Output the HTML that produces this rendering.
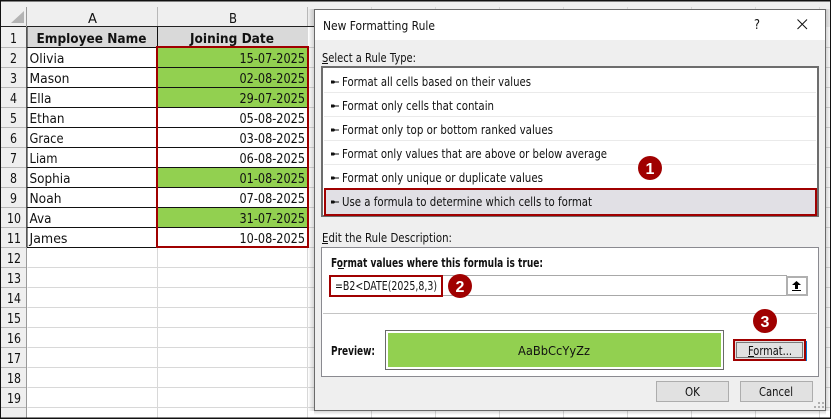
<!DOCTYPE html>
<html><head><meta charset="utf-8">
<style>
html,body{margin:0;padding:0;background:#fff;width:831px;height:419px;overflow:hidden}
svg{display:block}
text{font-family:"DejaVu Sans",sans-serif;font-size:12px;fill:#111}
.c{font-size:13.5px}
.b{font-weight:bold}
</style></head><body>
<svg width="831" height="419" viewBox="0 0 831 419" xmlns="http://www.w3.org/2000/svg">
<defs>
<linearGradient id="sl" x1="0" x2="1" y1="0" y2="0"><stop offset="0" stop-color="#000" stop-opacity="0"/><stop offset="1" stop-color="#000" stop-opacity=".16"/></linearGradient>
<linearGradient id="sr" x1="0" x2="1" y1="0" y2="0"><stop offset="0" stop-color="#000" stop-opacity=".16"/><stop offset="1" stop-color="#000" stop-opacity="0"/></linearGradient>
<linearGradient id="sb" x1="0" x2="0" y1="0" y2="1"><stop offset="0" stop-color="#000" stop-opacity=".16"/><stop offset="1" stop-color="#000" stop-opacity="0"/></linearGradient>
</defs>
<rect width="831" height="419" fill="#fff"/>
<!-- headers -->
<rect x="0" y="0" width="831" height="27" fill="#efefef"/>
<rect x="0" y="0" width="27" height="419" fill="#efefef"/>
<path d="M24 11V23H11Z" fill="#b4b4b4"/>
<!-- light grid -->
<path d="M27.5 247.5H831M27.5 267.5H831M27.500 287.500H831M27.500 307.500H831M27.500 327.500H831M27.500 347.500H831M27.500 367.500H831M27.500 387.500H831M27.500 407.500H831M308 47.500H831M308 67.500H831M308 87.500H831M308 107.500H831M308 127.500H831M308 147.500H831M308 167.500H831M308 187.500H831M308 207.500H831M308 227.500H831" stroke="#d8d8d8" stroke-width="1"/>
<path d="M157.500 247V419M307.500 247V419M371.500 7V419M435.500 7V419M499.500 7V419M563.500 7V419M627.500 7V419M691.500 7V419M755.500 7V419M819.500 7V419" stroke="#d8d8d8" stroke-width="1"/>
<!-- header separators -->
<path d="M0 47.500H27M0 67.500H27M0 87.500H27M0 107.500H27M0 127.500H27M0 147.500H27M0 167.500H27M0 187.500H27M0 207.500H27M0 227.500H27M0 247.500H27M0 267.500H27M0 287.500H27M0 307.500H27M0 327.500H27M0 347.500H27M0 367.500H27M0 387.500H27M0 407.500H27" stroke="#b8b8b8"/>
<path d="M157.500 7V26M307.500 7V26" stroke="#b8b8b8"/>
<path d="M0 26.500H320" stroke="#222"/>
<path d="M26.500 7V419" stroke="#999"/>
<!-- table -->
<rect x="27" y="27" width="281" height="20" fill="#d9d9d9"/>
<rect x="27" y="47" width="281" height="200" fill="#fff"/>
<rect x="158" y="47" width="150" height="60" fill="#92d050"/>
<rect x="158" y="167" width="150" height="20" fill="#92d050"/>
<rect x="158" y="207" width="150" height="20" fill="#92d050"/>
<path d="M27 47.500H308M27 67.500H308M27 87.500H308M27 107.500H308M27 127.500H308M27 147.500H308M27 167.500H308M27 187.500H308M27 207.500H308M27 227.500H308M27 247.500H158M27 27V247" stroke="#111" stroke-width="1"/>
<path d="M157.500 27V47" stroke="#111"/>
<rect x="157" y="47" width="151" height="200" fill="none" stroke="#a00000" stroke-width="2"/>
<!-- column headers -->
<text class="c" x="88" y="23" textLength="9" lengthAdjust="spacingAndGlyphs">A</text>
<text class="c" x="229" y="23" textLength="8" lengthAdjust="spacingAndGlyphs">B</text>
<text class="c b" x="36.500" y="43" textLength="110" lengthAdjust="spacingAndGlyphs">Employee Name</text>
<text class="c b" x="190" y="43" textLength="84" lengthAdjust="spacingAndGlyphs">Joining Date</text>
<!-- row numbers -->
<g>
<text class="c" x="10" y="43" textLength="7" lengthAdjust="spacingAndGlyphs">1</text>
<text class="c" x="10" y="63" textLength="7" lengthAdjust="spacingAndGlyphs">2</text>
<text class="c" x="10" y="83" textLength="7" lengthAdjust="spacingAndGlyphs">3</text>
<text class="c" x="10" y="103" textLength="7" lengthAdjust="spacingAndGlyphs">4</text>
<text class="c" x="10" y="123" textLength="7" lengthAdjust="spacingAndGlyphs">5</text>
<text class="c" x="10" y="143" textLength="7" lengthAdjust="spacingAndGlyphs">6</text>
<text class="c" x="10" y="163" textLength="7" lengthAdjust="spacingAndGlyphs">7</text>
<text class="c" x="10" y="183" textLength="7" lengthAdjust="spacingAndGlyphs">8</text>
<text class="c" x="10" y="203" textLength="7" lengthAdjust="spacingAndGlyphs">9</text>
<text class="c" x="7" y="223" textLength="14" lengthAdjust="spacingAndGlyphs">10</text>
<text class="c" x="7" y="243" textLength="14" lengthAdjust="spacingAndGlyphs">11</text>
<text class="c" x="7" y="263" textLength="14" lengthAdjust="spacingAndGlyphs">12</text>
<text class="c" x="7" y="283" textLength="14" lengthAdjust="spacingAndGlyphs">13</text>
<text class="c" x="7" y="303" textLength="14" lengthAdjust="spacingAndGlyphs">14</text>
<text class="c" x="7" y="323" textLength="14" lengthAdjust="spacingAndGlyphs">15</text>
<text class="c" x="7" y="343" textLength="14" lengthAdjust="spacingAndGlyphs">16</text>
<text class="c" x="7" y="363" textLength="14" lengthAdjust="spacingAndGlyphs">17</text>
<text class="c" x="7" y="383" textLength="14" lengthAdjust="spacingAndGlyphs">18</text>
<text class="c" x="7" y="403" textLength="14" lengthAdjust="spacingAndGlyphs">19</text>
</g>
<text class="c" x="29.500" y="63" textLength="35" lengthAdjust="spacingAndGlyphs">Olivia</text>
<text class="c" x="29.500" y="83" textLength="40" lengthAdjust="spacingAndGlyphs">Mason</text>
<text class="c" x="29.500" y="103" textLength="22" lengthAdjust="spacingAndGlyphs">Ella</text>
<text class="c" x="29.500" y="123" textLength="35" lengthAdjust="spacingAndGlyphs">Ethan</text>
<text class="c" x="29.500" y="143" textLength="34" lengthAdjust="spacingAndGlyphs">Grace</text>
<text class="c" x="29.500" y="163" textLength="28" lengthAdjust="spacingAndGlyphs">Liam</text>
<text class="c" x="29.500" y="183" textLength="41" lengthAdjust="spacingAndGlyphs">Sophia</text>
<text class="c" x="29.500" y="203" textLength="32" lengthAdjust="spacingAndGlyphs">Noah</text>
<text class="c" x="29.500" y="223" textLength="22" lengthAdjust="spacingAndGlyphs">Ava</text>
<text class="c" x="29.500" y="243" textLength="38" lengthAdjust="spacingAndGlyphs">James</text>
<g>
<text class="c" x="239.500" y="63" textLength="65.500" lengthAdjust="spacingAndGlyphs">15-07-2025</text>
<text class="c" x="239.500" y="83" textLength="65.500" lengthAdjust="spacingAndGlyphs">02-08-2025</text>
<text class="c" x="239.500" y="103" textLength="65.500" lengthAdjust="spacingAndGlyphs">29-07-2025</text>
<text class="c" x="239.500" y="123" textLength="65.500" lengthAdjust="spacingAndGlyphs">05-08-2025</text>
<text class="c" x="239.500" y="143" textLength="65.500" lengthAdjust="spacingAndGlyphs">03-08-2025</text>
<text class="c" x="239.500" y="163" textLength="65.500" lengthAdjust="spacingAndGlyphs">06-08-2025</text>
<text class="c" x="239.500" y="183" textLength="65.500" lengthAdjust="spacingAndGlyphs">01-08-2025</text>
<text class="c" x="239.500" y="203" textLength="65.500" lengthAdjust="spacingAndGlyphs">07-08-2025</text>
<text class="c" x="239.500" y="223" textLength="65.500" lengthAdjust="spacingAndGlyphs">31-07-2025</text>
<text class="c" x="239.500" y="243" textLength="65.500" lengthAdjust="spacingAndGlyphs">10-08-2025</text>
</g>
<!-- dialog shadow -->
<rect x="308" y="9" width="6" height="402" fill="url(#sl)"/>
<rect x="826" y="9" width="5" height="402" fill="url(#sr)"/>
<rect x="314" y="411" width="512" height="4" fill="url(#sb)"/>
<!-- dialog -->
<rect x="314.500" y="9.500" width="511" height="401" fill="#efefef" stroke="#6a6a6a"/>
<rect x="315" y="10" width="510" height="30" fill="#fff"/>
<text x="323" y="30" textLength="112" lengthAdjust="spacingAndGlyphs">New Formatting Rule</text>
<text x="754" y="29" style="font-size:13px" textLength="6" lengthAdjust="spacingAndGlyphs">?</text>
<path d="M797.500 19.500L807 29M807 19.500L797.500 29" stroke="#111" fill="none"/>
<text x="322" y="62" textLength="94" lengthAdjust="spacingAndGlyphs">Select a Rule Type:</text>
<rect x="322" y="63" width="6" height="1" fill="#111"/>
<!-- list box -->
<rect x="322" y="67" width="496" height="149" fill="#fff" stroke="#6d6d6d" stroke-width="2"/>
<path d="M324 92.500H816M324 116.500H816M324 140.500H816M324 164.500H816" stroke="#eaeaea"/>
<rect x="325" y="189" width="491" height="26" fill="#e1e0e5" stroke="#a00000" stroke-width="2"/>
<g fill="#111">
<path d="M331 80.500H334L335 81.500H339V82.500H335L334 83.500H331Z"/>
<path d="M331 104.500H334L335 105.500H339V106.500H335L334 107.500H331Z"/>
<path d="M331 128.500H334L335 129.500H339V130.500H335L334 131.500H331Z"/>
<path d="M331 152.500H334L335 153.500H339V154.500H335L334 155.500H331Z"/>
<path d="M331 176.500H334L335 177.500H339V178.500H335L334 179.500H331Z"/>
<path d="M331 200.500H334L335 201.500H339V202.500H335L334 203.500H331Z"/>
</g>
<text x="342" y="86" textLength="189" lengthAdjust="spacingAndGlyphs">Format all cells based on their values</text>
<text x="342" y="110" textLength="152" lengthAdjust="spacingAndGlyphs">Format only cells that contain</text>
<text x="342" y="134" textLength="211" lengthAdjust="spacingAndGlyphs">Format only top or bottom ranked values</text>
<text x="342" y="158" textLength="265" lengthAdjust="spacingAndGlyphs">Format only values that are above or below average</text>
<text x="342" y="182" textLength="201" lengthAdjust="spacingAndGlyphs">Format only unique or duplicate values</text>
<text x="342" y="206" textLength="250" lengthAdjust="spacingAndGlyphs">Use a formula to determine which cells to format</text>
<!-- edit -->
<text x="322" y="242" textLength="130" lengthAdjust="spacingAndGlyphs">Edit the Rule Description:</text>
<rect x="322" y="243" width="6" height="1" fill="#111"/>
<rect x="321.500" y="247.500" width="497" height="129" fill="#fff" stroke="#8a8a90"/>
<text class="b" x="331" y="267" textLength="212" lengthAdjust="spacingAndGlyphs">Format values where this formula is true:</text>
<rect x="338" y="268" width="6" height="1" fill="#111"/>
<rect x="329.500" y="275.500" width="457" height="20" fill="#fff" stroke="#a8a8a8"/>
<rect x="787" y="277" width="20" height="18" fill="#fff" stroke="#b0b0b0" stroke-width="2"/>
<path d="M795 285V289H798V285H801L796.500 281L792 285ZM792 290H801V291H792Z" fill="#000"/>
<rect x="330" y="276" width="112" height="20" fill="#fff" stroke="#a00000" stroke-width="2"/>
<text x="335" y="290" textLength="102" lengthAdjust="spacingAndGlyphs">=B2&lt;DATE(2025,8,3)</text>
<path d="M323 313.500H817" stroke="#c4c4c4"/>
<text class="b" x="331" y="355" textLength="44" lengthAdjust="spacingAndGlyphs">Preview:</text>
<rect x="385.500" y="330.500" width="338" height="39" fill="#fff" stroke="#6a6a6a"/>
<rect x="388" y="333" width="333" height="34" fill="#92d050"/>
<text x="518" y="355" textLength="72" lengthAdjust="spacingAndGlyphs">AaBbCcYyZz</text>
<!-- buttons -->
<rect x="735" y="341" width="72" height="20" fill="#0078d7"/>
<rect x="734" y="340" width="71" height="20" fill="#e1e1e1" stroke="#a00000" stroke-width="2"/>
<rect x="736.500" y="342.500" width="66" height="15" fill="none" stroke="#111" stroke-dasharray="1 1"/>
<text x="748" y="355" textLength="44" lengthAdjust="spacingAndGlyphs">Format...</text>
<rect x="748" y="356" width="6" height="1" fill="#111"/>
<rect x="656.500" y="381.500" width="72" height="20" fill="#e1e1e1" stroke="#adadad"/>
<text x="685" y="396" textLength="15" lengthAdjust="spacingAndGlyphs">OK</text>
<rect x="740.500" y="381.500" width="72" height="20" fill="#e1e1e1" stroke="#adadad"/>
<text x="759" y="396" textLength="34" lengthAdjust="spacingAndGlyphs">Cancel</text>
<!-- resize grip -->
<path d="M822 402h2v2h-2zM818 406h2v2h-2zM822 406h2v2h-2zM814 406h2v2h-2zM818 402h2v2h-2z" fill="#b0b0b0"/>
<!-- badges -->
<g>
<circle cx="650" cy="168" r="12" fill="#a00000"/>
<circle cx="460" cy="286" r="12" fill="#a00000"/>
<circle cx="765" cy="321" r="12" fill="#a00000"/>
</g>
<g text-anchor="middle">
<text x="650" y="174" style="font-size:16px;fill:#fff;font-weight:bold;font-family:'Liberation Sans',sans-serif">1</text>
<text x="460" y="292" style="font-size:16px;fill:#fff;font-weight:bold;font-family:'Liberation Sans',sans-serif">2</text>
<text x="765" y="327" style="font-size:16px;fill:#fff;font-weight:bold;font-family:'Liberation Sans',sans-serif">3</text>
</g>
<!-- outer frame -->
<rect x="0" y="0" width="831" height="1.500" fill="#111"/>
<rect x="0" y="417.500" width="831" height="1.500" fill="#111"/>
<rect x="0" y="0" width="1" height="419" fill="#111"/>
<rect x="830" y="0" width="1" height="419" fill="#111"/>
</svg>
</body></html>
